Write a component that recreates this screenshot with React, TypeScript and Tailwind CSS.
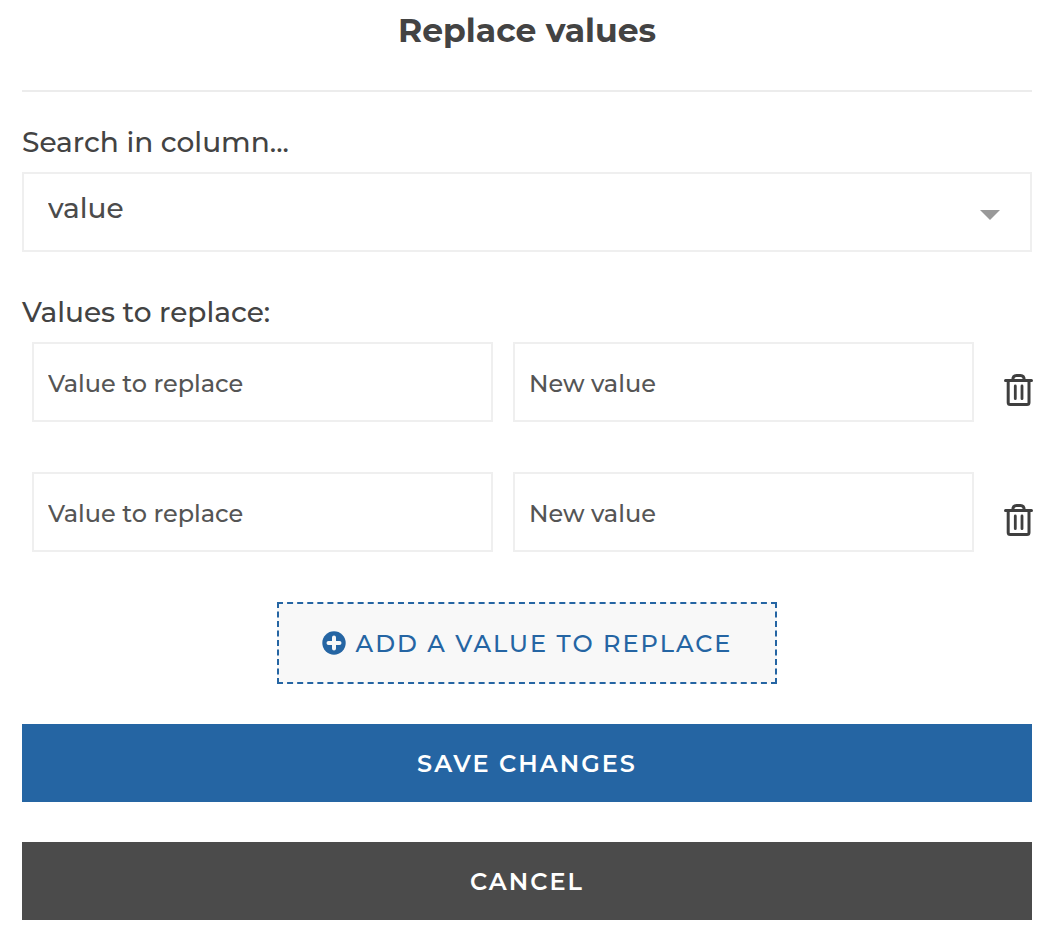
import { useState } from "react";

function TrashIcon() {
  return (
    <svg width="30" height="34" viewBox="0 0 30 34" fill="none" stroke="currentColor" aria-hidden="true">
      <path d="M2.500 7.500H28.500" strokeWidth="3" strokeLinecap="round" />
      <path d="M9.800 7C9.800 4 11 2.500 13.500 2.500H17.500C20 2.500 21.200 4 21.200 7" strokeWidth="3" />
      <path d="M5.200 8V29.500Q5.200 31.500 7.200 31.500H24Q26 31.500 26 29.500V8" strokeWidth="3" />
      <path d="M12.300 13V25.700M19 13V25.700" strokeWidth="2.800" strokeLinecap="round" />
    </svg>
  );
}

function PlusCircleIcon() {
  return (
    <svg width="24" height="24" viewBox="0 0 24 24" aria-hidden="true">
      <circle cx="12" cy="12" r="11.700" fill="currentColor" />
      <path d="M12 6.500V17.500M6.500 12H17.500" stroke="#f8f8f8" strokeWidth="4" strokeLinecap="round" />
    </svg>
  );
}

const fieldClass =
  "h-20 min-w-0 flex-1 border-2 border-[#efefef] bg-white px-[14px] pt-0.5 text-2xl font-medium text-[#555] placeholder:text-[#555] placeholder:opacity-100 outline-none focus:border-[#2565a3]";

export default function App() {
  const [rows, setRows] = useState([1, 2]);

  return (
    <main className="bg-white pr-[18px] pb-[18px] pl-[22px] font-['Montserrat','Inter',sans-serif] text-[#434343]">
      <h1 className="border-b-2 border-[#ececec] pt-[7px] pb-[37px] text-center text-[33px] leading-[46px] font-bold">
        Replace values
      </h1>

      <form onSubmit={(event) => event.preventDefault()}>
        <label htmlFor="column" className="mt-8 block text-[28px] leading-9 font-medium">
          Search in column...
        </label>
        <div className="mt-3 grid items-center">
          <select
            id="column"
            className="col-start-1 row-start-1 h-20 w-full appearance-none border-2 border-[#efefef] bg-white pr-16 pb-2 pl-6 text-[28px] font-medium text-[#4b4b4b] outline-none focus:border-[#2565a3]"
          >
            <option>value</option>
          </select>
          <svg
            className="pointer-events-none col-start-1 row-start-1 mt-1.5 mr-8 justify-self-end"
            width="20"
            height="10"
            viewBox="0 0 20 10"
            aria-hidden="true"
          >
            <path d="M0 0H20L10 10Z" fill="#999" />
          </svg>
        </div>

        <fieldset>
          <legend className="pt-[42px] pb-3 text-[28px] leading-9 font-medium">Values to replace:</legend>
          <div className="flex flex-col gap-[50px]">
            {rows.map((id) => (
              <div key={id} className="flex items-center pl-[10px]">
                <div className="flex min-w-0 flex-1 gap-5">
                  <input className={fieldClass} placeholder="Value to replace" aria-label="Value to replace" />
                  <input className={fieldClass} placeholder="New value" aria-label="New value" />
                </div>
                <button
                  type="button"
                  aria-label="Delete row"
                  className="-mr-px ml-[29px] shrink-0 pt-4 text-[#3f3f3f]"
                  onClick={() => setRows(rows.filter((row) => row !== id))}
                >
                  <TrashIcon />
                </button>
              </div>
            ))}
          </div>
        </fieldset>

        <button
          type="button"
          className="mx-auto mt-[50px] flex h-[82px] w-[500px] max-w-full items-center justify-center gap-2.5 border-2 border-dashed border-[#2565a3] bg-[#f8f8f8] text-2xl font-medium tracking-[2px] text-[#2565a3]"
          onClick={() => setRows([...rows, Math.max(0, ...rows) + 1])}
        >
          <PlusCircleIcon />
          <span className="pt-0.5">ADD A VALUE TO REPLACE</span>
        </button>
        <button
          type="submit"
          className="mt-10 block h-[78px] w-full bg-[#2565a3] pt-0.5 text-2xl font-semibold tracking-[2px] text-white"
        >
          SAVE CHANGES
        </button>
        <button
          type="button"
          className="mt-10 block h-[78px] w-full bg-[#4b4b4b] pt-0.5 text-2xl font-semibold tracking-[2px] text-white"
        >
          CANCEL
        </button>
      </form>
    </main>
  );
}
